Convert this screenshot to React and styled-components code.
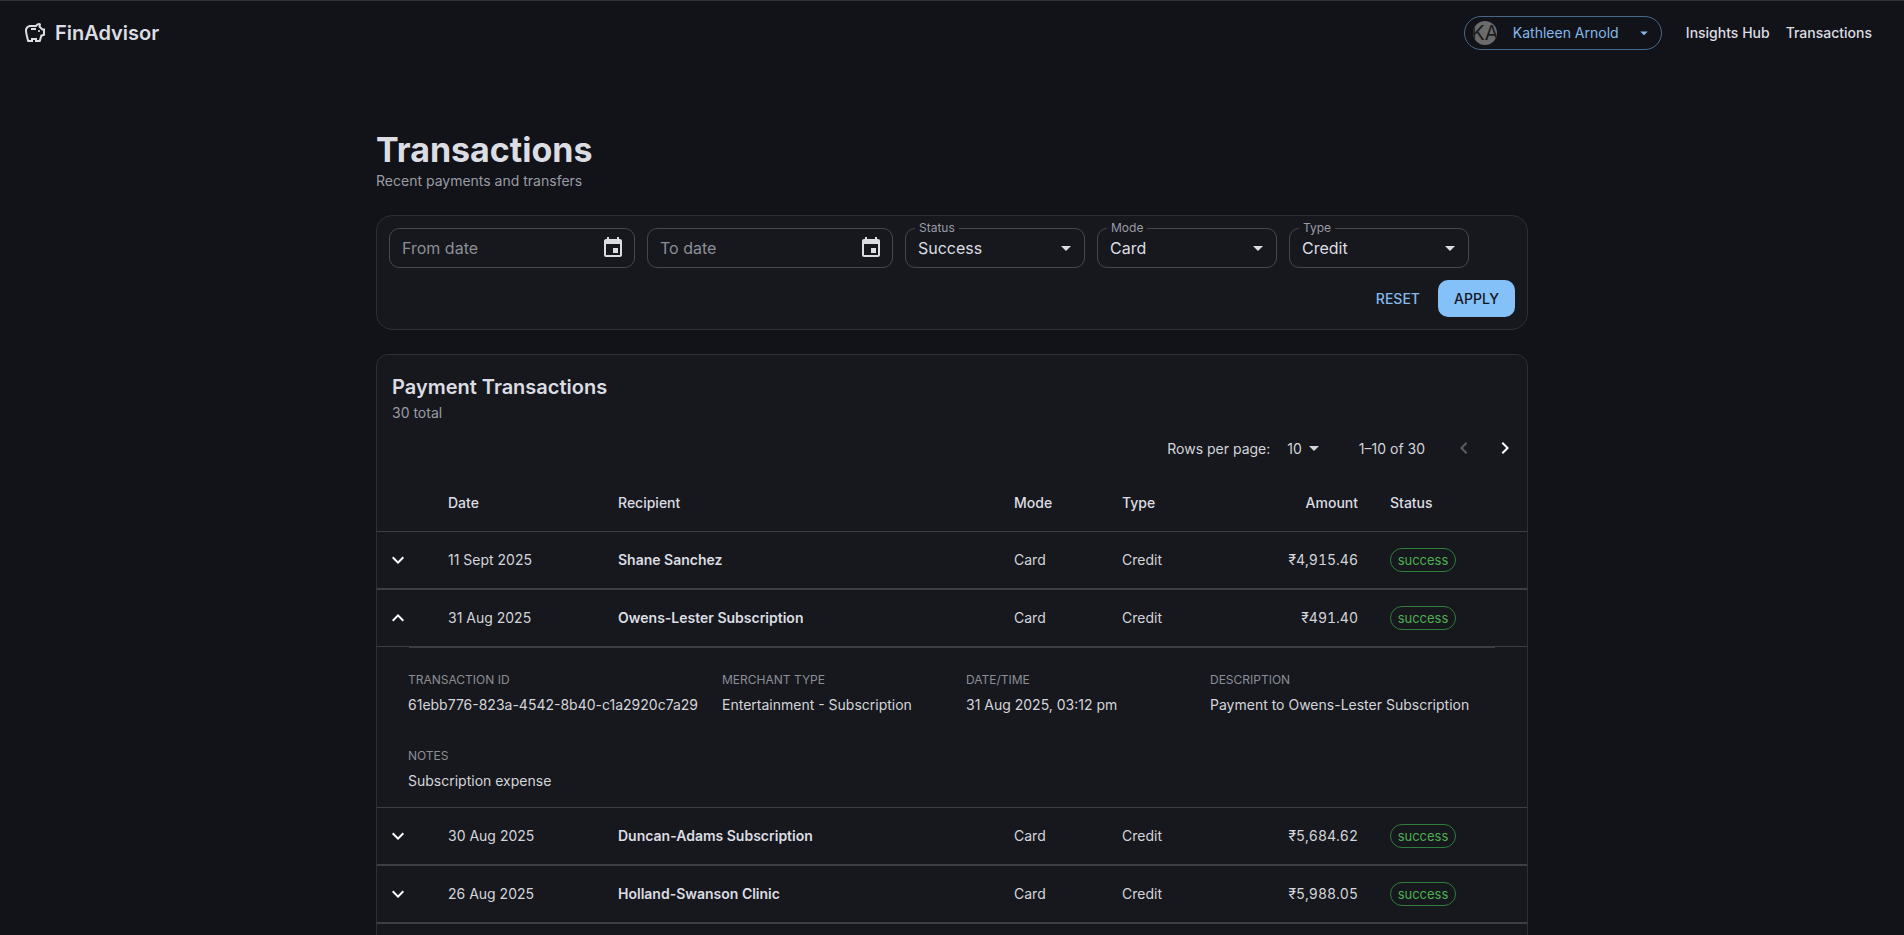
import { Fragment } from "react";
import styled, { createGlobalStyle } from "styled-components";
import {
  MdArrowDropDown,
  MdChevronLeft,
  MdChevronRight,
  MdEvent,
  MdKeyboardArrowDown,
  MdKeyboardArrowUp,
  MdOutlineSavings,
} from "react-icons/md";

const transactions = [
  { date: "11 Sept 2025", recipient: "Shane Sanchez", amount: "₹4,915.46" },
  {
    date: "31 Aug 2025",
    recipient: "Owens-Lester Subscription",
    amount: "₹491.40",
    open: true,
  },
  { date: "30 Aug 2025", recipient: "Duncan-Adams Subscription", amount: "₹5,684.62" },
  { date: "26 Aug 2025", recipient: "Holland-Swanson Clinic", amount: "₹5,988.05" },
];

const details = [
  { label: "Transaction ID", value: "61ebb776-823a-4542-8b40-c1a2920c7a29" },
  { label: "Merchant Type", value: "Entertainment - Subscription" },
  { label: "Date/Time", value: "31 Aug 2025, 03:12 pm" },
  { label: "Description", value: "Payment to Owens-Lester Subscription" },
  { label: "Notes", value: "Subscription expense" },
];

const filters = [
  { label: "Status", value: "Success" },
  { label: "Mode", value: "Card" },
  { label: "Type", value: "Credit" },
];

export default function App() {
  return (
    <>
      <GlobalStyle />
      <NavBar>
        <Brand>
          <MdOutlineSavings size={24} />
          <BrandName>FinAdvisor</BrandName>
        </Brand>
        <NavRight>
          <UserPill>
            <Avatar>KA</Avatar>
            <UserName>Kathleen Arnold</UserName>
            <MdArrowDropDown size={18} />
          </UserPill>
          <NavLinks>
            <NavLink>Insights Hub</NavLink>
            <NavLink>Transactions</NavLink>
          </NavLinks>
        </NavRight>
      </NavBar>

      <Main>
        <PageTitle>Transactions</PageTitle>
        <PageSubtitle>Recent payments and transfers</PageSubtitle>

        <FilterCard>
          <FilterRow>
            <DateField>
              <Placeholder>From date</Placeholder>
              <MdEvent size={24} />
            </DateField>
            <DateField>
              <Placeholder>To date</Placeholder>
              <MdEvent size={24} />
            </DateField>
            {filters.map((f) => (
              <SelectField key={f.label}>
                <FloatingLabel>{f.label}</FloatingLabel>
                <span>{f.value}</span>
                <MdArrowDropDown size={24} />
              </SelectField>
            ))}
          </FilterRow>
          <FilterActions>
            <ResetButton>RESET</ResetButton>
            <ApplyButton>APPLY</ApplyButton>
          </FilterActions>
        </FilterCard>

        <TableCard>
          <CardTitle>Payment Transactions</CardTitle>
          <CardCount>30 total</CardCount>

          <Pagination>
            <span>Rows per page:</span>
            <RowsSelect>
              10
              <MdArrowDropDown size={24} />
            </RowsSelect>
            <PageRange>1–10 of 30</PageRange>
            <PageArrows>
              <PageArrow $disabled>
                <MdChevronLeft size={24} />
              </PageArrow>
              <PageArrow>
                <MdChevronRight size={24} />
              </PageArrow>
            </PageArrows>
          </Pagination>

          <HeadRow>
            <span />
            <span>Date</span>
            <span>Recipient</span>
            <span>Mode</span>
            <span>Type</span>
            <AmountCell>Amount</AmountCell>
            <span>Status</span>
          </HeadRow>

          {transactions.map((t) => (
            <Fragment key={t.recipient}>
              <BodyRow $open={t.open}>
                <ExpandCell>
                  {t.open ? (
                    <MdKeyboardArrowUp size={24} />
                  ) : (
                    <MdKeyboardArrowDown size={24} />
                  )}
                </ExpandCell>
                <span>{t.date}</span>
                <Recipient>{t.recipient}</Recipient>
                <span>Card</span>
                <span>Credit</span>
                <AmountCell>{t.amount}</AmountCell>
                <StatusCell>
                  <StatusBadge>success</StatusBadge>
                </StatusCell>
              </BodyRow>
              {t.open && (
                <DetailRow>
                  <DetailGrid>
                    {details.map((d) => (
                      <div key={d.label}>
                        <DetailLabel>{d.label}</DetailLabel>
                        <DetailValue>{d.value}</DetailValue>
                      </div>
                    ))}
                  </DetailGrid>
                </DetailRow>
              )}
            </Fragment>
          ))}
        </TableCard>
      </Main>
    </>
  );
}

const GlobalStyle = createGlobalStyle`
  html {
    overflow: hidden;
    height: 935px;
  }
  body {
    margin: 0;
    background-color: #111318;
    color: #dcdde3;
    font-family: Inter, "Liberation Sans", sans-serif;
  }
`;

const NavBar = styled.header`
  height: 64px;
  box-sizing: border-box;
  border-top: 1px solid #2e3035;
  display: flex;
  align-items: center;
  justify-content: space-between;
  padding: 0 32px 0 23px;
`;

const Brand = styled.div`
  display: flex;
  align-items: center;
  gap: 8px;
`;

const BrandName = styled.span`
  font-size: 20px;
  font-weight: 600;
`;

const NavRight = styled.div`
  display: flex;
  align-items: center;
  gap: 24px;
`;

const UserPill = styled.div`
  width: 198px;
  height: 34px;
  box-sizing: border-box;
  display: flex;
  align-items: center;
  padding: 0 8px;
  border: 1px solid #44698c;
  border-radius: 17px;
  color: #85b9ec;
`;

const Avatar = styled.div`
  width: 24px;
  height: 24px;
  flex: none;
  border-radius: 50%;
  overflow: hidden;
  display: flex;
  align-items: center;
  justify-content: center;
  background-color: #6b6b6b;
  color: #1c1c1c;
  font-size: 20px;
`;

const UserName = styled.span`
  flex: 1;
  margin-left: 16px;
  font-size: 14px;
  white-space: nowrap;
`;

const NavLinks = styled.nav`
  display: flex;
  gap: 16px;
`;

const NavLink = styled.span`
  font-size: 14px;
  font-weight: 500;
`;

const Main = styled.main`
  width: 1152px;
  margin: 0 auto;
  padding-top: 65px;
`;

const PageTitle = styled.h1`
  margin: 0;
  font-size: 34px;
  font-weight: 700;
  line-height: 41px;
`;

const PageSubtitle = styled.p`
  margin: 0 0 24px;
  font-size: 14px;
  line-height: 21px;
  color: #9a9ca5;
`;

const FilterCard = styled.section`
  box-sizing: border-box;
  height: 115px;
  padding: 12px;
  border: 1px solid #2d2f35;
  border-radius: 16px;
  background-color: #16181d;
`;

const FilterRow = styled.div`
  display: flex;
  gap: 12px;
`;

const FieldBox = styled.div`
  position: relative;
  box-sizing: border-box;
  height: 40px;
  display: flex;
  align-items: center;
  justify-content: space-between;
  border: 1px solid #44464c;
  border-radius: 10px;
  font-size: 16px;
`;

const DateField = styled(FieldBox)`
  width: 246px;
  padding: 0 9px 0 12px;
`;

const Placeholder = styled.span`
  color: #8c8e97;
`;

const SelectField = styled(FieldBox)`
  width: 180px;
  padding: 0 6px 0 12px;
`;

const FloatingLabel = styled.label`
  position: absolute;
  top: -9px;
  left: 9px;
  padding: 0 4px;
  background-color: #16181d;
  color: #9a9ca5;
  font-size: 12px;
  line-height: 15px;
`;

const FilterActions = styled.div`
  display: flex;
  justify-content: flex-end;
  align-items: center;
  gap: 18px;
  margin-top: 12px;
`;

const ResetButton = styled.button`
  padding: 0 0 1px;
  border: 0;
  background: none;
  color: #85b9ec;
  font: 500 14px Inter, sans-serif;
`;

const ApplyButton = styled.button`
  width: 77px;
  height: 37px;
  padding: 0 0 1px;
  border: 0;
  border-radius: 10px;
  background-color: #85c1f9;
  color: #10161d;
  font: 500 14px Inter, sans-serif;
`;

const TableCard = styled.section`
  box-sizing: border-box;
  margin-top: 24px;
  padding: 17px 0 60px;
  border: 1px solid #2d2f35;
  border-radius: 12px;
  background-color: #16181d;
`;

const CardTitle = styled.h2`
  margin: 0 15px;
  font-size: 20px;
  font-weight: 600;
  line-height: 30px;
`;

const CardCount = styled.p`
  margin: 0 15px;
  font-size: 14px;
  line-height: 21px;
  color: #9a9ca5;
`;

const Pagination = styled.div`
  box-sizing: border-box;
  height: 52px;
  padding: 0 10px 2px 0;
  display: flex;
  align-items: center;
  justify-content: flex-end;
  font-size: 14px;
  color: #d4d5da;
`;

const RowsSelect = styled.span`
  display: flex;
  align-items: center;
  margin-left: 17px;
`;

const PageRange = styled.span`
  margin-left: 33px;
`;

const PageArrows = styled.span`
  display: flex;
  gap: 17px;
  margin-left: 27px;
`;

const PageArrow = styled.span`
  display: flex;
  color: ${(p) => (p.$disabled ? "#5c5e63" : "#ffffff")};
`;

const rowColumns = "55px 170px 396px 108px 128px 140px 1fr";

const HeadRow = styled.div`
  box-sizing: border-box;
  height: 57px;
  display: grid;
  grid-template-columns: ${rowColumns};
  align-items: center;
  border-bottom: 1px solid #3c3e43;
  font-size: 14px;
  font-weight: 500;

  & > span {
    padding: 0 16px 2px;
  }
`;

const BodyRow = styled.div`
  box-sizing: border-box;
  height: ${(p) => (p.$open ? "57px" : "58px")};
  display: grid;
  grid-template-columns: ${rowColumns};
  align-items: center;
  border-bottom: ${(p) => (p.$open ? "1px" : "2px")} solid #3c3e43;
  font-size: 14px;
  color: #d4d5da;

  & > span {
    padding: 0 16px 2px;
  }
`;

const ExpandCell = styled.div`
  display: flex;
  padding-left: 9px;
  color: #ffffff;
`;

const Recipient = styled.span`
  font-weight: 600;
  color: #dcdde3;
`;

const AmountCell = styled.span`
  text-align: right;
  font-variant-numeric: tabular-nums;
`;

const StatusCell = styled.div`
  display: flex;
  padding: 0 16px;
`;

const StatusBadge = styled.span`
  display: inline-flex;
  align-items: center;
  justify-content: center;
  box-sizing: border-box;
  width: 66px;
  height: 24px;
  border: 1px solid #2f7d3a;
  border-radius: 12px;
  color: #4caf50;
  font-size: 13px;
`;

const DetailRow = styled.div`
  padding: 0 32px;
  border-bottom: 1px solid #3c3e43;
`;

const DetailGrid = styled.div`
  box-sizing: border-box;
  height: 160px;
  padding-top: 23px;
  display: grid;
  grid-template-columns: 290px 220px 220px 1fr;
  grid-auto-rows: 51.5px;
  gap: 24px;
  border-top: 1px solid #3c3e43;

  & > div {
    margin-left: -1px;
  }
`;

const DetailLabel = styled.div`
  font-size: 12px;
  line-height: 18px;
  text-transform: uppercase;
  color: #8c8e97;
`;

const DetailValue = styled.div`
  margin-top: 5.4px;
  font-size: 14px;
  line-height: 21px;
  color: #d4d5da;
`;
